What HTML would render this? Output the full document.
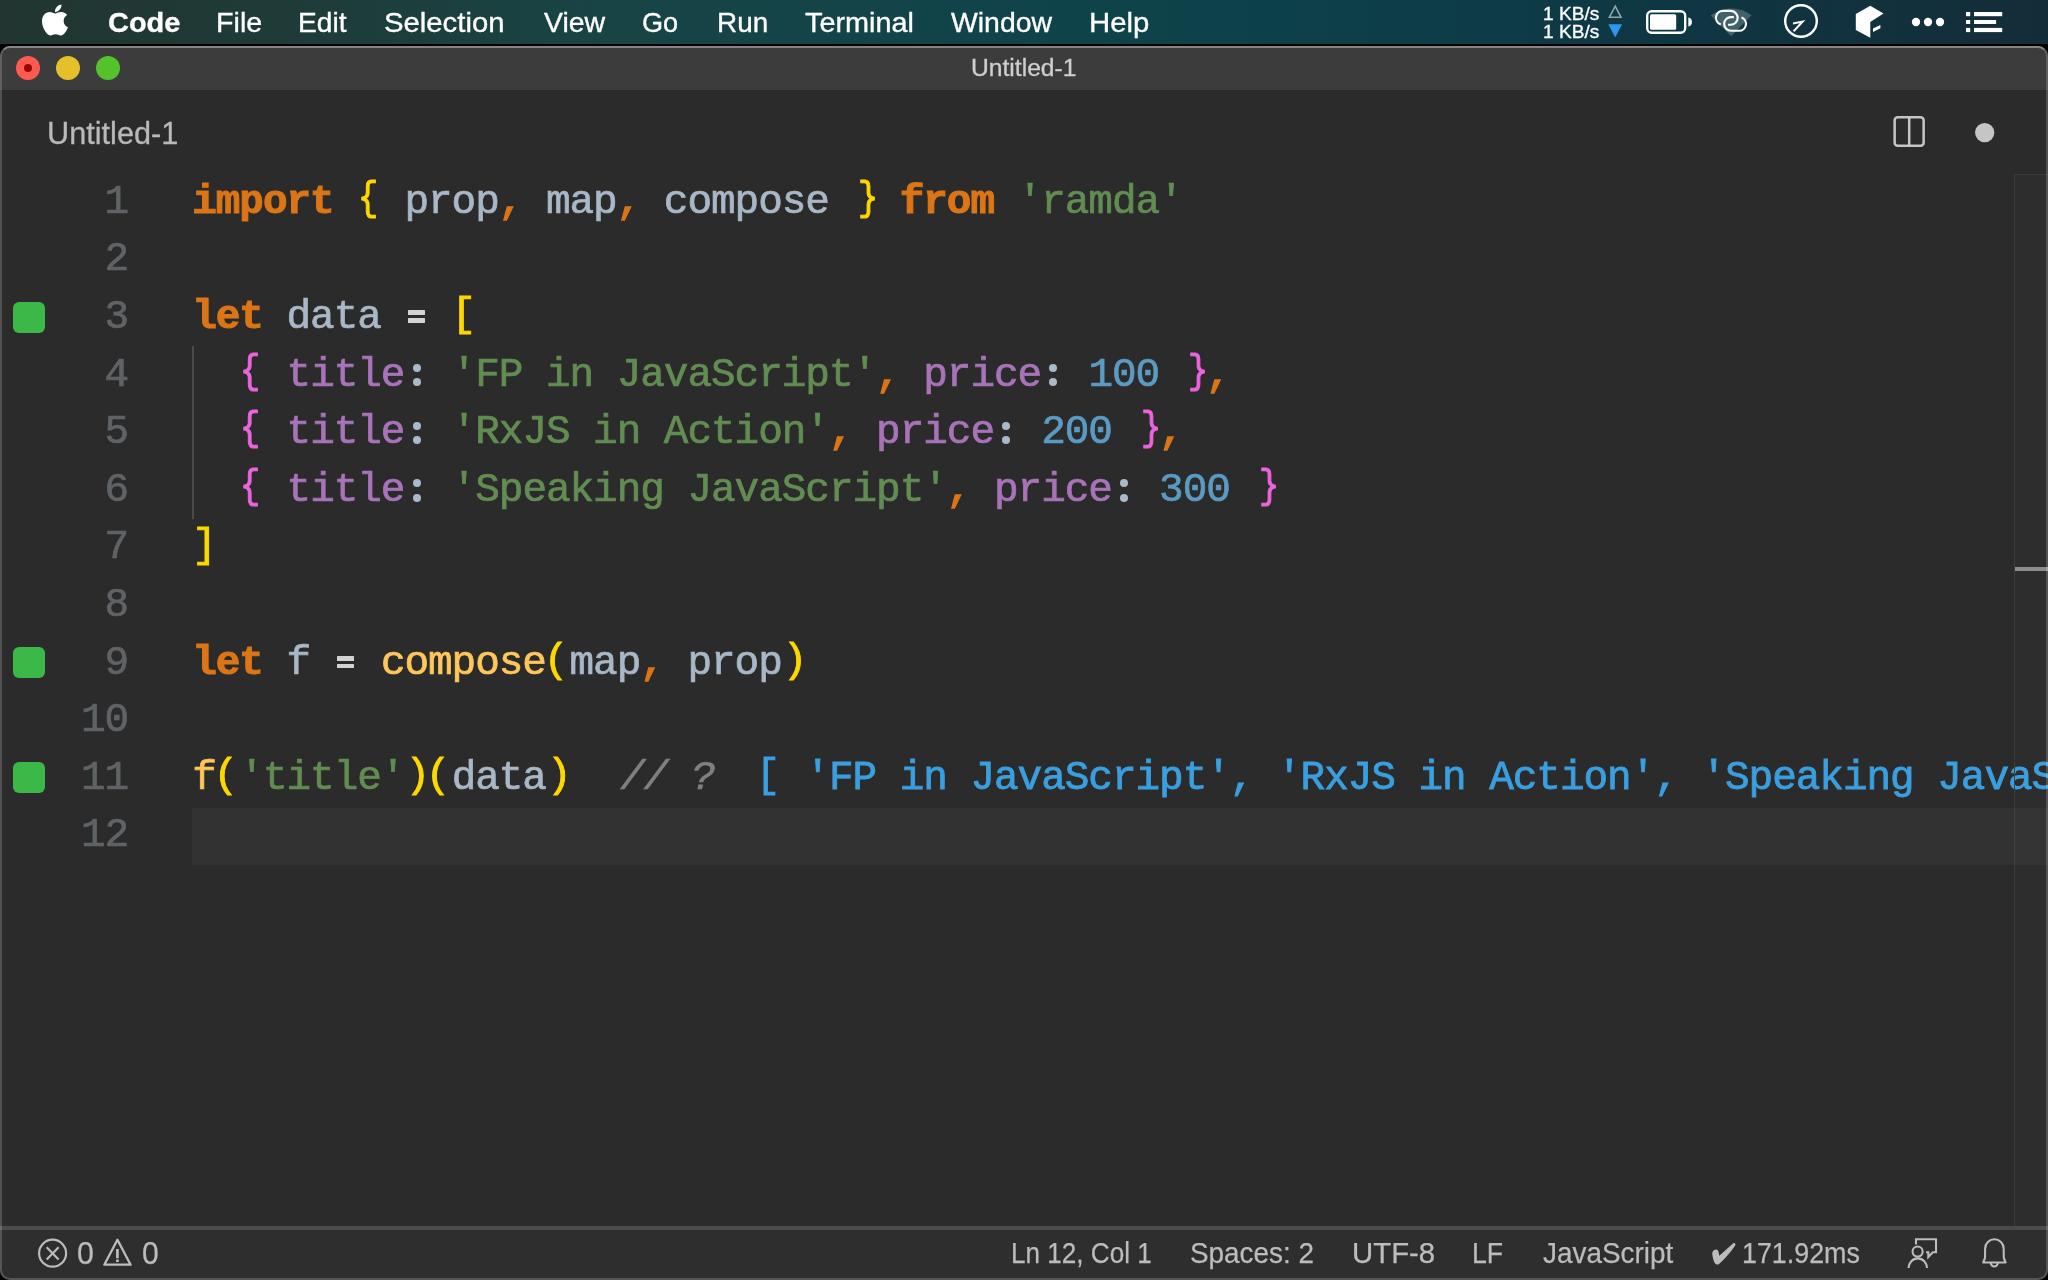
<!DOCTYPE html>
<html>
<head>
<meta charset="utf-8">
<title>Untitled-1</title>
<style>
*{margin:0;padding:0;box-sizing:border-box}
html,body{width:2048px;height:1280px;overflow:hidden;background:#000}
body{position:relative;font-family:"Liberation Sans",sans-serif;-webkit-font-smoothing:antialiased}
.abs{position:absolute}
/* ---------- macOS menu bar ---------- */
#menubar{will-change:transform;position:absolute;left:0;top:0;width:2048px;height:44px;
  background:linear-gradient(90deg,#223530 0%,#1f3a37 12%,#184445 30%,#10444a 48%,#0d424a 60%,#0d3c47 72%,#0f3541 85%,#142c38 100%)}
#menubar .mi{-webkit-text-stroke:0.35px;position:absolute;top:0.6px;height:44px;line-height:44px;font-size:28px;color:#fff;white-space:nowrap;transform-origin:0 50%}
#menubar .mi.b{font-weight:bold}
#menubar svg{position:absolute;overflow:visible}
.kb{-webkit-text-stroke:0.3px;position:absolute;color:#fff;font-size:17.5px;line-height:18px;white-space:nowrap;transform-origin:0 50%}
/* ---------- window ---------- */
#win{will-change:transform;position:absolute;left:0;top:46px;width:2048px;height:1234px;border-radius:10px;background:#2b2b2b;overflow:hidden}
#frame{position:absolute;left:0;top:46px;width:2048px;height:1234px;border-radius:10px;border:2px solid rgba(255,255,255,0.19);border-top-color:#858585;pointer-events:none;z-index:50}
#titlebar{position:absolute;left:0;top:0;width:2048px;height:44px;background:#3c3c3c}
#titlebar .tl{position:absolute;top:10px;width:24px;height:24px;border-radius:50%}
#title{-webkit-text-stroke:0.3px;position:absolute;left:972px;top:-0.4px;height:44px;line-height:44px;font-size:24.4px;color:#cfcfcf;white-space:nowrap;transform-origin:0 50%}
#tabname{-webkit-text-stroke:0.3px;position:absolute;left:49px;top:65.2px;height:44px;line-height:44px;font-size:31.5px;color:#b9b9b9;white-space:nowrap;transform-origin:0 50%}
/* ---------- editor ---------- */
#editor{position:absolute;left:0;top:128.4px;width:2048px;height:1052px;font-family:"Liberation Mono",monospace;font-size:41px;letter-spacing:-1.024px;line-height:57.6px;color:#a9b7c6;white-space:pre;-webkit-text-stroke:0.72px;will-change:transform}
.ln{-webkit-text-stroke:0.7px;position:absolute;margin-top:-0.3px;left:0;width:128.2px;text-align:right;color:#606366;height:57.6px}
.cl{position:absolute;margin-top:-0.3px;left:192.2px;height:57.6px;white-space:pre}
.k{color:#db7516;font-weight:bold;-webkit-text-stroke:1.0px}
.o{color:#db7516;-webkit-text-stroke:1.4px}
.g{color:#ffd700;position:relative;top:-1.5px;-webkit-text-stroke:0.95px}
.g.b{top:-3px;-webkit-text-stroke:1.05px}
.m{color:#ec64de;position:relative;top:-3px;left:1px;-webkit-text-stroke:1.05px}
.s{color:#628d52}
.p{color:#a873b9}
.n{color:#5b9bc3}
.f{color:#ffc65a}
.c{color:#808080;font-style:italic;position:relative;left:3.5px}
.q{color:#3a9fdf;-webkit-text-stroke:0.85px}
.qb{position:relative;left:-2.5px;top:-2px}
.e{position:relative;color:transparent;-webkit-text-stroke:0}
.e::before,.e::after{content:"";position:absolute;left:3.4px;width:17.3px;height:4.7px;background:#d3d3d3;border-radius:0.5px}
.e::before{top:16.5px}.e::after{top:24.3px}
.po{left:-2.3px}.pc{left:1px}
.bo,.bc{display:inline-block;transform:scaleX(0.82)}
.bo{left:-1.5px !important}.bc{left:3.3px !important}
.d{position:relative;color:transparent;-webkit-text-stroke:0}
.d::before,.d::after{content:"";position:absolute;left:8.2px;width:8.1px;height:8.1px;border-radius:50%;background:#a9b9c9}
.d::before{top:12.7px}.d::after{top:26.8px}
.sq{position:absolute;left:13px;width:32px;height:31px;border-radius:6px;background:#3cb848}
/* ---------- status bar ---------- */
#status{position:absolute;left:0;top:1180px;width:2048px;height:54px;background:#2e2e2e;border-top:4px solid #4b4b4b}
#status .si{position:absolute;top:0.8px;height:44px;line-height:44px;font-size:30px;color:#bcbcbc;white-space:nowrap;transform-origin:0 50%}
#status svg{position:absolute;overflow:visible}
#s_e0,#s_w0{font-size:32px !important;top:1.2px !important}
#status .si{-webkit-text-stroke:0.25px}
</style>
</head>
<body>
<!-- MENUBAR -->
<div id="menubar">
  <svg style="left:42px;top:4px" width="26" height="32" viewBox="4 32 377 448"><path fill="#fff" d="M318.7 268.7c-.2-36.7 16.4-64.4 50-84.8-18.800-26.900-47.200-41.700-84.700-44.600-35.500-2.800-74.300 20.700-88.500 20.700-15 0-49.400-19.700-76.400-19.700C63.300 141.200 4 184.800 4 273.500q0 39.300 14.400 81.200c12.800 36.700 59 126.700 107.200 125.200 25.200-.6 43-17.900 75.800-17.900 31.800 0 48.300 17.900 76.400 17.900 48.600-.7 90.400-82.500 102.600-119.300-65.200-30.700-61.700-90-61.700-91.900zm-56.600-164.200c27.300-32.400 24.800-61.900 24-72.500-24.100 1.400-52 16.400-67.900 34.900-17.500 19.800-27.800 44.300-25.600 71.900 26.100 2 49.900-11.400 69.500-34.300z"/></svg>
  <span class="mi b" id="m_code" style="left:108.00px;transform:scaleX(1.0331)">Code</span>
  <span class="mi" id="m_file" style="left:215.50px;transform:scaleX(1.0238)">File</span>
  <span class="mi" id="m_edit" style="left:297.50px;transform:scaleX(1.0047)">Edit</span>
  <span class="mi" id="m_sel" style="left:384.00px;transform:scaleX(1.0460)">Selection</span>
  <span class="mi" id="m_view" style="left:543.60px;transform:scaleX(1.0165)">View</span>
  <span class="mi" id="m_go" style="left:642.40px;transform:scaleX(0.9678)">Go</span>
  <span class="mi" id="m_run" style="left:716.60px;transform:scaleX(0.9964)">Run</span>
  <span class="mi" id="m_term" style="left:805.30px;transform:scaleX(1.0289)">Terminal</span>
  <span class="mi" id="m_win" style="left:950.70px;transform:scaleX(1.0140)">Window</span>
  <span class="mi" id="m_help" style="left:1088.90px;transform:scaleX(1.0455)">Help</span>

  <span class="kb" id="kb1" style="left:1543.00px;top:4.5px;transform:scaleX(1.0906)">1 KB/s</span>
  <span class="kb" id="kb2" style="left:1543.00px;top:23px;transform:scaleX(1.0906)">1 KB/s</span>
  <svg style="left:0;top:0" width="2048" height="44" viewBox="0 0 2048 44">
    <!-- up / down triangles -->
    <path d="M1615.200 6.200 L1621 17.300 L1609.400 17.300 Z" fill="none" stroke="#8fa3a8" stroke-width="1.600" stroke-linejoin="miter"/>
    <path d="M1608.300 24.200 L1622.100 24.200 L1615.200 37.500 Z" fill="#2e96f0"/>
    <!-- battery -->
    <rect x="1647.200" y="11.200" width="38" height="21.600" rx="4.500" ry="4.500" fill="none" stroke="#fff" stroke-width="2.400"/>
    <rect x="1650" y="14.200" width="26.200" height="15.600" rx="1.500" fill="#fff"/>
    <path d="M1688.300 17.400 c3.200 0.700 3.600 3 3.600 4.500 s-0.400 3.800 -3.600 4.500 Z" fill="#fff"/>
    <!-- wifi fan + chain -->
    <path d="M1710.700 15.500 A 33.500 33.500 0 0 1 1751.600 15.200 L1731.200 36.200 Z" fill="#fff" fill-opacity="0.220"/>
    <path d="M1728.060 24.750 L1730.700 24.750 A6.950 6.950 0 0 0 1730.700 10.850 L1722.900 10.850 A6.950 6.950 0 0 0 1720.800 24.430" fill="none" stroke="#fff" stroke-width="2.150"/>
    <path d="M1733.900 17.050 L1731 17.050 A6.850 6.850 0 0 0 1731 30.750 L1739.100 30.750 A6.850 6.850 0 0 0 1741.470 17.470" fill="none" stroke="#fff" stroke-width="2.150"/>
    <!-- circle w/ arrow -->
    <circle cx="1801" cy="21" r="15.800" fill="none" stroke="#fff" stroke-width="2.400"/>
    <path d="M1793.600 31.200 L1802.600 21.600 L1793 23.600" fill="none" stroke="#fff" stroke-width="2" stroke-linejoin="miter"/>
    <!-- cube -->
    <path d="M1870.300 5.700 L1883.500 13.600 L1870.300 22 L1870.300 37.800 L1855.800 29.900 L1855.800 14.100 Z" fill="#fff"/>
    <path d="M1873 28.600 L1880.400 24.900 L1880.400 28.200 L1873 32.100 Z" fill="#fff"/>
    <!-- dots -->
    <circle cx="1916" cy="22" r="4.150" fill="#fff"/><circle cx="1928" cy="22" r="4.150" fill="#fff"/><circle cx="1940" cy="22" r="4.150" fill="#fff"/>
    <!-- list -->
    <rect x="1966" y="12" width="4.200" height="4.200" fill="#fff"/><rect x="1974" y="12" width="28.200" height="4.200" fill="#fff"/>
    <rect x="1966" y="20" width="4.200" height="4" fill="#fff"/><rect x="1974" y="20" width="22.100" height="4" fill="#fff"/>
    <rect x="1966" y="27.900" width="4.200" height="4.200" fill="#fff"/><rect x="1974" y="27.900" width="28.200" height="4.200" fill="#fff"/>
  </svg>
</div>

<!-- WINDOW -->
<div id="win">
  <div id="titlebar">
    <div class="tl" style="left:16px;background:#ff5a52"><div style="position:absolute;left:8px;top:8px;width:8px;height:8px;border-radius:50%;background:#9b0707"></div></div>
    <div class="tl" style="left:56px;background:#e6c02a"></div>
    <div class="tl" style="left:96px;background:#53c22b"></div>
    <div id="title" style="left:971.20px;transform:scaleX(1.0102)">Untitled-1</div>
  </div>
  <div id="tabname" style="left:47.40px;transform:scaleX(0.9739)">Untitled-1</div>

  <svg class="abs" style="left:0;top:44px" width="2048" height="84" viewBox="0 90 2048 84">
    <rect x="1894.650" y="117.150" width="29" height="28.700" rx="3" fill="none" stroke="#c5c5c5" stroke-width="2.500"/>
    <path d="M1909.200 117 L1909.200 146" stroke="#c5c5c5" stroke-width="2.500"/>
    <circle cx="1984.700" cy="132.600" r="9.650" fill="#c5c5c5"/>
  </svg>
  <div id="editor">
    <div class="abs" style="left:192px;top:633.6px;width:1856px;height:57.6px;background:#323232"></div>
    <div class="abs" style="left:192px;top:172.4px;width:2px;height:172.8px;background:#4a4a4a"></div>
    <div class="sq" style="top:127.6px"></div>
    <div class="sq" style="top:473.2px"></div>
    <div class="sq" style="top:588.4px"></div>
    <div class="ln" style="top:0.0px">1</div>
    <div class="cl" style="top:0.0px"><span class="k">import</span> <span class="g b bo">{</span> prop<span class="o">,</span> map<span class="o">,</span> compose <span class="g b bc">}</span> <span class="k">from</span> <span class="s">'ramda'</span></div>
    <div class="ln" style="top:57.6px">2</div>
    <div class="ln" style="top:115.2px">3</div>
    <div class="cl" style="top:115.2px"><span class="k">let</span> data <span class="e">=</span> <span class="g">[</span></div>
    <div class="ln" style="top:172.8px">4</div>
    <div class="cl" style="top:172.8px">  <span class="m bo">{</span> <span class="p">title</span><span class="d">:</span> <span class="s">'FP in JavaScript'</span><span class="o">,</span> <span class="p">price</span><span class="d">:</span> <span class="n">100</span> <span class="m bc">}</span><span class="o">,</span></div>
    <div class="ln" style="top:230.4px">5</div>
    <div class="cl" style="top:230.4px">  <span class="m bo">{</span> <span class="p">title</span><span class="d">:</span> <span class="s">'RxJS in Action'</span><span class="o">,</span> <span class="p">price</span><span class="d">:</span> <span class="n">200</span> <span class="m bc">}</span><span class="o">,</span></div>
    <div class="ln" style="top:288.0px">6</div>
    <div class="cl" style="top:288.0px">  <span class="m bo">{</span> <span class="p">title</span><span class="d">:</span> <span class="s">'Speaking JavaScript'</span><span class="o">,</span> <span class="p">price</span><span class="d">:</span> <span class="n">300</span> <span class="m bc">}</span></div>
    <div class="ln" style="top:345.6px">7</div>
    <div class="cl" style="top:345.6px"><span class="g">]</span></div>
    <div class="ln" style="top:403.2px">8</div>
    <div class="ln" style="top:460.8px">9</div>
    <div class="cl" style="top:460.8px"><span class="k">let</span> f <span class="e">=</span> <span class="f">compose</span><span class="g po">(</span>map<span class="o">,</span> prop<span class="g pc">)</span></div>
    <div class="ln" style="top:518.4px">10</div>
    <div class="ln" style="top:576.0px">11</div>
    <div class="cl" style="top:576.0px"><span class="f">f</span><span class="g po">(</span><span class="s">'title'</span><span class="g pc">)</span><span class="g po">(</span>data<span class="g pc">)</span>  <span class="c">// ?</span>  <span class="q"><span class="qb">[</span> 'FP in JavaScript', 'RxJS in Action', 'Speaking JavaScript' ]</span></div>
    <div class="ln" style="top:633.6px">12</div>
    <div class="abs" style="left:2014px;top:-0.4px;width:34px;height:1052px;border-left:1px solid #3d3d3d;border-top:1px solid #3a3a3a;background:rgba(255,255,255,0.012)"></div>
    <div class="abs" style="left:2015px;top:392.6px;width:33px;height:4px;background:#8c8c8c"></div>
  </div>

  <div id="status">
    <span class="si" id="s_e0" style="left:77.00px;transform:scaleX(0.9484)">0</span>
    <span class="si" id="s_w0" style="left:142.00px;transform:scaleX(0.9417)">0</span>
    <span class="si" id="s_ln" style="left:1010.60px;transform:scaleX(0.8705)">Ln 12, Col 1</span>
    <span class="si" id="s_sp" style="left:1190.20px;transform:scaleX(0.9295)">Spaces: 2</span>
    <span class="si" id="s_utf" style="left:1351.60px;transform:scaleX(0.9786)">UTF-8</span>
    <span class="si" id="s_lf" style="left:1472.40px;transform:scaleX(0.8894)">LF</span>
    <span class="si" id="s_js" style="left:1542.80px;transform:scaleX(0.9294)">JavaScript</span>
    <span class="si" id="s_ms" style="left:1742.00px;transform:scaleX(0.8943)">171.92ms</span>
    <svg style="left:0;top:-4px" width="2048" height="54" viewBox="0 1226 2048 54" fill="none" stroke="#bcbcbc" stroke-width="2.200">
      <!-- error -->
      <circle cx="52.600" cy="1253.200" r="13.500"/>
      <path d="M46.700 1247.200 L58.600 1259.400 M58.600 1247.200 L46.700 1259.400"/>
      <!-- warning -->
      <path d="M117.450 1239.700 L130.600 1264.700 L104.300 1264.700 Z" stroke-linejoin="round" stroke-width="2.300"/>
      <path d="M117.400 1249 L117.400 1258.300 M117.400 1259.600 L117.400 1261.900" stroke-width="2.700"/>
      <!-- check -->
      <path d="M1712.300 1254.500 C1711.900 1251.500 1713.500 1249.600 1715.800 1249.500 C1717.600 1249.500 1718.400 1250.800 1718.600 1252.200 L1719.300 1255.800 L1733 1243.500 C1734.200 1242.500 1735.900 1243.200 1735.300 1245.200 C1731 1252 1724 1259.500 1719 1264 C1717.500 1265.200 1715.500 1264.600 1714.600 1262.800 C1713.400 1260.200 1712.600 1257.200 1712.300 1254.500 Z" fill="#bcbcbc" stroke="none"/>
      <!-- feedback -->
      <path d="M1916 1244.600 L1916 1239.250 L1936 1239.250 L1936 1252.250 L1932.800 1252.250 L1928.300 1257 L1928.300 1252.250 L1926 1252.250" stroke-linejoin="miter" stroke-width="2.100"/>
      <circle cx="1917.600" cy="1251.600" r="5.050" stroke-width="2.100"/>
      <path d="M1908.600 1268.100 A9.200 9.700 0 0 1 1927 1268.100" stroke-width="2.100"/>
      <!-- bell -->
      <path d="M1983.200 1262.500 L1985 1258 L1985.150 1248.500 A9.250 9.250 0 0 1 2003.650 1248.500 L2003.800 1258 L2005.600 1262.500 Z" stroke-linejoin="round" stroke-width="2.100"/>
      <path d="M1990.900 1263 A3.400 3.500 0 0 0 1997.700 1263" stroke-width="2.100"/>
    </svg>
  </div>
</div>
<div id="frame"></div>
</body>
</html>
